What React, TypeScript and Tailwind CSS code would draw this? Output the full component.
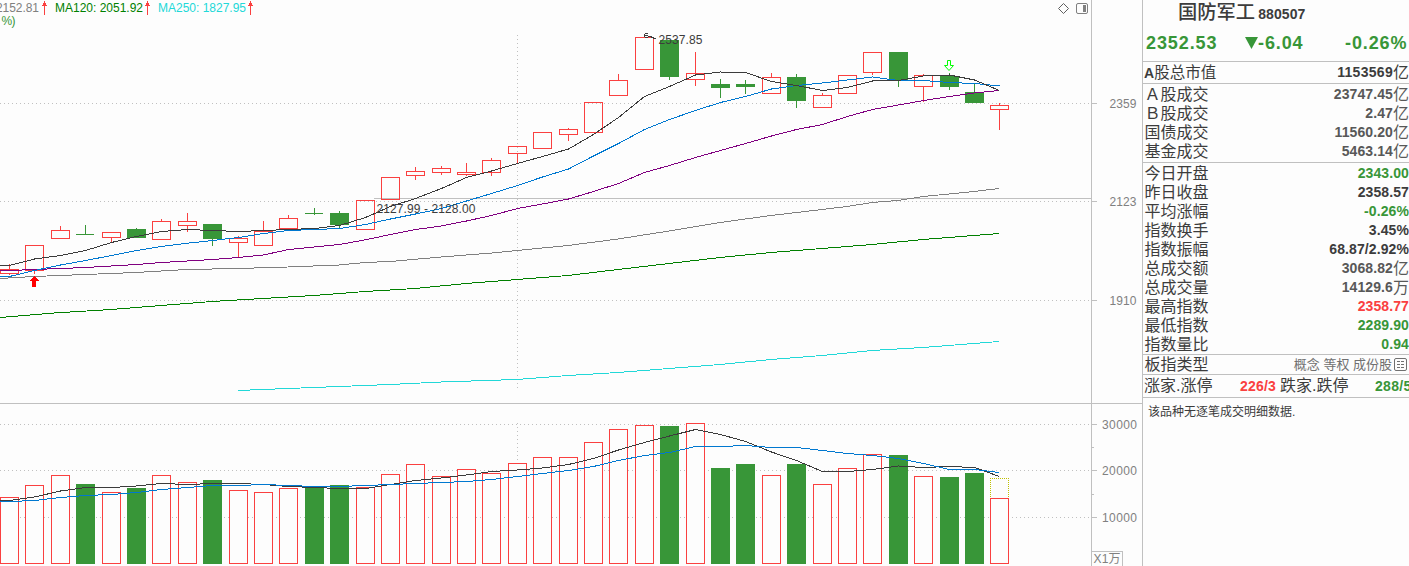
import React from "react";

// [top, bottom, high, low, isDown]
type Candle = [number, number, number, number, boolean];

const RED = "#fa4040";
const GREEN = "#389638";
const GRID = "#c0c0c0";

const xs = [
  0, 25, 51, 76, 102, 127, 152, 178, 203, 229, 254, 279, 305, 330, 356, 381,
  406, 432, 457, 482, 508, 533, 559, 584, 609, 635, 660, 686, 711, 736, 762,
  787, 813, 838, 863, 889, 914, 940, 965, 990,
];

const candles: Candle[] = [
  [269, 273, 264, 274, false],
  [245, 270, 245, 273, false],
  [230, 238, 226, 238, false],
  [234, 234, 225, 234, true],
  [232, 237, 232, 241, false],
  [229, 237, 228, 237, true],
  [221, 239, 219, 239, false],
  [221, 225, 213, 231, false],
  [224, 238, 224, 245, true],
  [238, 242, 236, 257, false],
  [231, 245, 221, 245, false],
  [218, 228, 215, 228, false],
  [213, 213, 208, 214, true],
  [213, 224, 211, 227, true],
  [200, 229, 200, 229, false],
  [177, 199, 177, 199, false],
  [171, 175, 167, 179, false],
  [168, 172, 166, 174, false],
  [172, 174, 163, 175, false],
  [160, 172, 158, 175, false],
  [146, 153, 146, 162, false],
  [132, 148, 132, 148, false],
  [129, 134, 128, 140, false],
  [102, 132, 102, 132, false],
  [80, 95, 74, 95, false],
  [37, 69, 37, 69, false],
  [40, 76, 40, 79, true],
  [73, 79, 52, 85, false],
  [84, 87, 79, 97, true],
  [84, 86, 80, 93, true],
  [77, 93, 73, 93, false],
  [77, 100, 74, 107, true],
  [95, 107, 93, 107, false],
  [75, 93, 75, 93, false],
  [52, 72, 52, 74, false],
  [52, 79, 52, 86, true],
  [75, 86, 74, 101, false],
  [76, 86, 73, 89, true],
  [92, 102, 84, 102, true],
  [105, 109, 103, 129, false],
];

const volumes = [
  497, 485, 475, 484, 492, 488, 475, 482, 480, 490, 492, 488, 487, 485, 487,
  474, 464, 476, 469, 473, 463, 457, 457, 442, 429, 425, 426, 423, 468, 464,
  475, 464, 484, 468, 454, 455, 476, 477, 473, 498,
];

const ma5 = [
  265, 258.5, 255, 250, 242, 236, 231, 229, 230, 231, 230, 229, 228, 225, 217,
  206, 198, 188, 177, 170.5, 163, 156, 148.5, 134, 117, 96, 86, 74.5, 71.5, 72,
  81, 85, 90, 87, 80.5, 80, 75.5, 74.5, 79.5, 90,
];
const ma10 = [
  276, 270, 264.5, 260, 255, 250, 246, 242.7, 240, 237, 233, 230, 229, 228,
  224, 218.5, 213.5, 208, 200.5, 193, 185, 176.5, 168.5, 155.5, 143, 129, 119,
  110, 102, 96, 88.5, 85, 82.5, 79.5, 76.5, 80, 80, 82, 83, 85.5,
];
const ma20 = [
  270, 269, 268, 267, 265.5, 264, 262, 260.5, 259, 257, 254.5, 249, 246.5, 244,
  239.3, 234, 229, 225.5, 220.5, 215, 208, 203.5, 198.5, 191, 183, 172, 165,
  157, 150, 143, 135.5, 129, 124, 116, 109, 104.5, 100, 96, 92.5, 90,
];
const vol5 = [
  500, 496.5, 490.5, 487, 487, 485.5, 483, 484, 483, 483, 484, 486, 487, 488,
  488, 484, 480, 477.5, 474.5, 471, 469.5, 467.5, 464, 458, 449.5, 442, 435.5,
  429, 434, 441, 451.5, 460, 471, 471, 469, 465.5, 467, 466, 467, 476,
];
const vol10 = [
  501, 500, 497, 495, 494, 492, 489, 487, 485, 485, 484, 485, 486, 486, 485,
  484, 483, 482, 481, 479, 476, 473, 470, 466, 460, 455, 452, 446, 446, 445,
  447, 447, 450, 453, 455, 458, 463, 469, 469, 472,
];

const ma60 =
  "0,278.5 34,276.5 85,274.5 136,272.5 187,269.5 238,268.5 288,267 339,265 365,262.5 390,261.5 441,257 492,253 517,250.5 568,245.5 618,239 669,231 720,222.5 771,215.5 822,209.5 847,206.5 872,202.5 898,200.5 923,196.5 949,194 974,191.5 999,188.5";
const ma120 =
  "0,317.5 54,313 111,309.5 161,305.5 212,301.5 263,298.5 314,295.5 365,291.5 415,288.5 466,283.5 517,279.5 568,275.5 618,269.5 669,263.5 720,257.5 771,252.5 822,248.5 872,244.5 923,239.5 999,233.5";
const ma250 =
  "238,390.5 288,388.5 339,386.5 390,384.5 441,382 517,379.5 568,375.5 618,372.5 669,368.5 720,364.5 771,359.5 822,355.5 872,350.5 923,347.5 999,341.5";

const toPoints = (ys: number[]) =>
  `0,${ys[0] + 0.5} ` + ys.map((y, i) => `${xs[i] + 9.5},${y + 0.5}`).join(" ");

const Line = ({ points, color }: { points: string; color: string }) => (
  <polyline
    points={points}
    fill="none"
    stroke={color}
    strokeWidth={1}
    shapeRendering="crispEdges"
  />
);

const UpArrow = ({ x }: { x: number }) => (
  <g fill={RED} shapeRendering="crispEdges">
    <rect x={x} y={1} width={1} height={14} />
    <rect x={x - 1} y={3} width={3} height={2} />
    <rect x={x - 2} y={5} width={5} height={1} />
  </g>
);

const Chart = () => (
  <svg
    width={1142}
    height={566}
    viewBox="0 0 1142 566"
    className="block shrink-0 font-['Liberation_Sans','Noto_Sans_CJK_SC',sans-serif] text-[12px]"
  >
    <g stroke={GRID} strokeDasharray="1 3" shapeRendering="crispEdges">
      {[103, 201, 300, 424, 470, 517].map((y) => (
        <line key={y} x1={0} x2={1091} y1={y + 0.5} y2={y + 0.5} />
      ))}
      <line x1={517.5} x2={517.5} y1={35} y2={388} />
      <line x1={517.5} x2={517.5} y1={423} y2={463} />
    </g>
    <g fill={GRID} shapeRendering="crispEdges">
      <rect x={374} y={198} width={717} height={1} />
      <rect x={0} y={403} width={1142} height={1} />
      <rect x={1091} y={0} width={1} height={566} />
      {[103, 201, 300, 424, 470, 517].map((y) => (
        <rect key={y} x={1092} y={y} width={5} height={1} />
      ))}
      <rect x={1092} y={447} width={2} height={1} />
      <rect x={1092} y={494} width={2} height={1} />
      <rect x={1092} y={551} width={31} height={1} />
      <rect x={1122} y={551} width={1} height={15} />
    </g>

    {/* candles */}
    <g shapeRendering="crispEdges">
      {candles.map(([top, bottom, high, low, down], i) => {
        const x = xs[i];
        const color = down ? GREEN : RED;
        return (
          <g key={x} fill={color}>
            <rect x={x + 9} y={high} width={1} height={top - high} />
            <rect x={x + 9} y={bottom} width={1} height={low - bottom + 1} />
            {down ? (
              <rect
                x={x}
                y={top}
                width={top === bottom ? 18 : 19}
                height={bottom - top + 1}
              />
            ) : (
              <rect
                x={x + 0.5}
                y={top + 0.5}
                width={18}
                height={bottom - top}
                fill="none"
                stroke={RED}
              />
            )}
          </g>
        );
      })}
    </g>

    {/* volume */}
    <g shapeRendering="crispEdges">
      {volumes.map((y, i) =>
        candles[i][4] ? (
          <rect key={i} x={xs[i]} y={y} width={19} height={564 - y} fill={GREEN} />
        ) : (
          <rect
            key={i}
            x={xs[i] + 0.5}
            y={y + 0.5}
            width={18}
            height={563 - y}
            fill="#fdfdfd"
            stroke={RED}
          />
        )
      )}
      <path
        d="M990 478.5h19M990.5 478v20M1008.5 478v20"
        fill="none"
        stroke="#c0c000"
        strokeDasharray="1 1"
      />
    </g>

    <Line points={ma250} color="#22d8d8" />
    <Line points={ma120} color="#008000" />
    <Line points={ma60} color="#808080" />
    <Line points={toPoints(ma20)} color="#800080" />
    <Line points={toPoints(ma10)} color="#0078d0" />
    <Line points={toPoints(ma5)} color="#3c3c3c" />
    <Line points={toPoints(vol5)} color="#3c3c3c" />
    <Line points={toPoints(vol10)} color="#0078d0" />

    {/* buy and sell marks */}
    <path d="M34 276l5 5h-3v6h-4v-6h-3z" fill="#ff0000" shapeRendering="crispEdges" />
    <path
      d="M947.5 60.5h3v5h3l-4.5 5l-4.5-5h3z"
      fill="#fdfdfd"
      stroke="#00ff00"
    />

    {/* callouts */}
    <g fill="#3c3c3c" shapeRendering="crispEdges">
      <rect x={645} y={33} width={3} height={1} />
      <rect x={644} y={34} width={1} height={3} />
      <rect x={645} y={35} width={3} height={1} />
      <rect x={648} y={36} width={4} height={1} />
      <rect x={645} y={37} width={3} height={1} />
      <rect x={651} y={37} width={3} height={1} />
      <rect x={653} y={38} width={3} height={1} />
    </g>
    <g fill="#3c3c3c">
      <text x={658.5} y={44} textLength={44}>
        2537.85
      </text>
      <text x={376.5} y={213} textLength={99}>
        2127.99 - 2128.00
      </text>
    </g>

    {/* legend */}
    <text x={-4} y={12} textLength={43} fill="#808080">
      2152.81
    </text>
    <text x={55} y={12} textLength={88} fill="#008000">
      MA120: 2051.92
    </text>
    <text x={158} y={12} textLength={88} fill="#22d8d8">
      MA250: 1827.95
    </text>
    <text x={1.5} y={25} fill={GREEN} textLength={14}>
      %)
    </text>
    <UpArrow x={44} />
    <UpArrow x={147} />
    <UpArrow x={250} />

    {/* axis */}
    <g fill="#808080">
      <text x={1109.5} y={108} textLength={27}>2359</text>
      <text x={1109.5} y={206} textLength={27}>2123</text>
      <text x={1109.5} y={305} textLength={27}>1910</text>
      <text x={1102} y={429} textLength={35}>30000</text>
      <text x={1102} y={475} textLength={35}>20000</text>
      <text x={1102} y={522} textLength={35}>10000</text>
      <text x={1093.5} y={563} textLength={27}>X1万</text>
    </g>

    {/* toolbar icons */}
    <path d="M1063.5 3.5l5 5l-5 5l-5-5z" fill="none" stroke="#606060" />
    <rect x={1076.5} y={3.5} width={11} height={10} rx={1.5} fill="none" stroke="#808080" />
    <rect x={1083} y={5} width={3} height={7} fill="#808080" />
  </svg>
);

interface RowProps {
  label: string;
  value: string;
  unit?: string;
  color?: string;
}

const Row: React.FC<RowProps> = ({
  label,
  value,
  unit,
  color = "text-[#3c3c3c]",
}) => (
  <div className="flex h-[19px] items-center justify-between">
    <span className="text-base/[19px]">{label}</span>
    <span className={`flex items-center ${color}`}>
      <b className="text-sm/[19px] tracking-[0.1px]">{value}</b>
      {unit && <span className="text-base/[19px]">{unit}</span>}
    </span>
  </div>
);

const Quote = () => (
  <div className="h-[566px] w-[267px] shrink-0 overflow-hidden border-l border-[#c0c0c0] whitespace-nowrap">
    <div className="flex h-[25px] items-center pl-[35px]">
      <span className="text-[19.3px]/[25px] font-medium">国防军工</span>
      <b className="pt-0.5 pl-[3px] text-sm/[20px] tracking-[0.1px]">880507</b>
    </div>
    <div className="flex h-9 items-center pl-[3px] text-[18px]/[34px] font-bold tracking-[0.9px] text-[#389638]">
      <span className="w-[99px] shrink-0">2352.53</span>
      <span className="flex w-[100px] shrink-0 items-center">
        <svg width="13" height="12" viewBox="0 0 13 12">
          <path d="M0 0h13l-6.5 12z" fill="#389638" />
        </svg>
        -6.04
      </span>
      <span>-0.26%</span>
    </div>
    <div className="flex h-[22px] items-center justify-between border-t border-[#c0c0c0] pl-px">
      <span className="text-[15.5px]/[21px]">
        <b className="text-sm">A</b>股总市值
      </span>
      <span className="flex items-center">
        <b className="text-sm/[21px] tracking-[0.3px]">1153569</b>
        <span className="text-base/[21px]">亿</span>
      </span>
    </div>
    <div className="border-t border-[#c0c0c0] pt-px pb-px pl-[1.5px]">
      <Row label="Ａ股成交" value="23747.45" unit="亿" color="text-[#585858]" />
      <Row label="Ｂ股成交" value="2.47" unit="亿" color="text-[#585858]" />
      <Row label="国债成交" value="11560.20" unit="亿" color="text-[#585858]" />
      <Row label="基金成交" value="5463.14" unit="亿" color="text-[#585858]" />
    </div>
    <div className="border-t border-[#c0c0c0] pt-px pl-[1.5px]">
      <Row label="今日开盘" value="2343.00" color="text-[#389638]" />
      <Row label="昨日收盘" value="2358.57" />
      <Row label="平均涨幅" value="-0.26%" color="text-[#389638]" />
      <Row label="指数换手" value="3.45%" />
      <Row label="指数振幅" value="68.87/2.92%" />
      <Row label="总成交额" value="3068.82" unit="亿" color="text-[#585858]" />
      <Row label="总成交量" value="14129.6" unit="万" color="text-[#585858]" />
      <Row label="最高指数" value="2358.77" color="text-[#fa4040]" />
      <Row label="最低指数" value="2289.90" color="text-[#389638]" />
      <Row label="指数量比" value="0.94" color="text-[#389638]" />
    </div>
    <div className="flex h-5 items-center justify-between border-t border-[#c0c0c0] pl-[1.5px]">
      <span className="text-base/[19px]">板指类型</span>
      <span className="flex items-center text-[13px]/[19px] text-[#707070]">
        概念 等权 成份股
        <svg
          width="13"
          height="13"
          viewBox="0 0 13 13"
          className="mr-0.5 ml-0.5"
          fill="none"
          stroke="#707070"
        >
          <rect x="0.5" y="0.5" width="12" height="12" rx="1.5" />
          <path d="M3 3.5h3M3 6.5h3M3 9.5h3M7 3.5h3M7 6.5h3M7 9.5h3" />
        </svg>
      </span>
    </div>
    <div className="flex h-[23px] items-center border-t border-[#c0c0c0] pl-px text-base/[20px]">
      <span className="w-24 shrink-0">涨家.涨停</span>
      <b className="w-10 shrink-0 text-sm tracking-[0.2px] text-[#fa4040]">226/3</b>
      <span className="w-[95px] shrink-0">跌家.跌停</span>
      <b className="shrink-0 text-sm tracking-[0.3px] text-[#389638]">288/5</b>
    </div>
    <div className="border-t border-[#c0c0c0] pt-[5px] pl-[5px] text-[12px]/[18px]">
      该品种无逐笔成交明细数据.
    </div>
  </div>
);

const App: React.FC = () => {
  return (
    <div className="flex h-[566px] w-[1409px] overflow-hidden bg-[#fdfdfd] font-['Liberation_Sans','Noto_Sans_CJK_SC',sans-serif] text-[#3c3c3c]">
      <Chart />
      <Quote />
    </div>
  );
};

export default App;
